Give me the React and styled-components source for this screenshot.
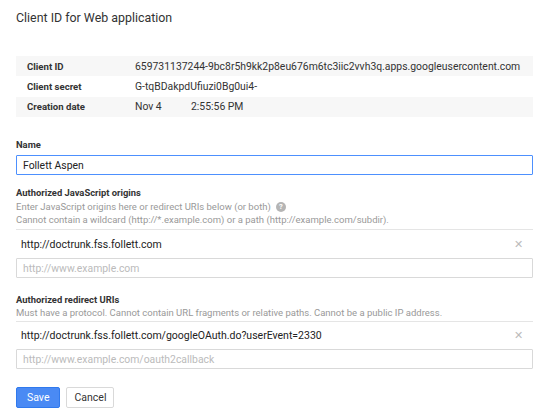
import React from 'react'
import styled, { createGlobalStyle } from 'styled-components'

const GlobalStyle = createGlobalStyle`
  body {
    margin: 0;
    background: #fff;
    font-family: Roboto, "Liberation Sans", Arial, sans-serif;
    color: #222;
  }
`

const Page = styled.div`
  width: 517px;
  padding: 9px 18px 0 16px;
`

const Title = styled.h1`
  margin: 0;
  font-size: 12.4px;
  font-weight: 400;
  line-height: 18px;
  color: #333;
`

const InfoTable = styled.div`
  margin-top: 29px;
  display: flex;
  flex-direction: column;
`

const InfoRow = styled.div`
  display: flex;
  align-items: center;
  height: 20.4px;
  padding-left: 11px;
  background: ${p => (p.$shaded ? '#f7f7f7' : '#fff')};
  font-size: 10.4px;
  white-space: nowrap;
`

const InfoLabel = styled.span`
  width: 108px;
  flex-shrink: 0;
  font-weight: 700;
  font-size: 9.6px;
  color: #333;
`

const InfoValue = styled.span`
  color: #333;
  display: flex;
`

const DatePart = styled.span`
  width: ${p => p.$w || 'auto'};
`

const Section = styled.div`
  margin-top: ${p => p.$top || 0}px;
`

const FieldLabel = styled.div`
  font-size: 9.4px;
  font-weight: 700;
  line-height: 14px;
  color: #333;
`

const Help = styled.div`
  font-size: 9.5px;
  line-height: ${p => p.$lh || 13}px;
  color: #999;
  display: flex;
  align-items: center;
  gap: 5px;
  white-space: nowrap;
`

const HelpIcon = styled.span`
  display: inline-flex;
  align-items: center;
  justify-content: center;
  width: 10px;
  height: 10px;
  border-radius: 50%;
  background: #b5b5b5;
  color: #fff;
  font-size: 7.5px;
  font-weight: 700;
  line-height: 1;
`

const Divider = styled.div`
  margin-top: 3px;
  border-top: 1px solid #e5e5e5;
`

const TextInput = styled.input`
  box-sizing: border-box;
  display: block;
  width: 100%;
  height: 20px;
  margin: 0;
  padding: 0 6px;
  border: 1px solid ${p => (p.$focused ? '#4d90fe' : '#d9d9d9')};
  border-radius: 1px;
  font-family: inherit;
  font-size: 10.4px;
  color: #222;
  outline: none;
  &::placeholder {
    color: #bbb;
  }
`

const UriItem = styled.div`
  display: flex;
  align-items: center;
  justify-content: space-between;
  height: ${p => p.$h || 28}px;
  padding: 0 10px 0 5px;
  font-size: 10.5px;
  color: #222;
`

const RemoveX = styled.span`
  color: #bbb;
  font-size: 11px;
  line-height: 1;
`

const Buttons = styled.div`
  margin-top: 18px;
  display: flex;
  gap: 6px;
`

const Button = styled.button`
  box-sizing: border-box;
  height: 21px;
  padding: 0 ${p => (p.$primary ? '10px' : '7px')};
  border-radius: 2px;
  font-family: inherit;
  font-size: 10.5px;
  border: 1px solid ${p => (p.$primary ? '#3079ed' : '#d9d9d9')};
  background: ${p => (p.$primary ? '#4a8af4' : '#fff')};
  color: ${p => (p.$primary ? '#fff' : '#333')};
  cursor: pointer;
`

export default function App() {
  return (
    <>
      <GlobalStyle />
      <Page>
        <Title>Client ID for Web application</Title>

        <InfoTable>
          <InfoRow $shaded>
            <InfoLabel>Client ID</InfoLabel>
            <InfoValue>659731137244-9bc8r5h9kk2p8eu676m6tc3iic2vvh3q.apps.googleusercontent.com</InfoValue>
          </InfoRow>
          <InfoRow>
            <InfoLabel>Client secret</InfoLabel>
            <InfoValue>G-tqBDakpdUfiuzi0Bg0ui4-</InfoValue>
          </InfoRow>
          <InfoRow $shaded>
            <InfoLabel>Creation date</InfoLabel>
            <InfoValue>
              <DatePart $w="56px">Nov 4</DatePart>
              <DatePart>2:55:56 PM</DatePart>
            </InfoValue>
          </InfoRow>
        </InfoTable>

        <Section $top={21}>
          <FieldLabel>Name</FieldLabel>
          <Section $top={3}>
            <TextInput $focused defaultValue="Follett Aspen" />
          </Section>
        </Section>

        <Section $top={11}>
          <FieldLabel>Authorized JavaScript origins</FieldLabel>
          <Help>
            Enter JavaScript origins here or redirect URIs below (or both)
            <HelpIcon>?</HelpIcon>
          </Help>
          <Help>Cannot contain a wildcard (http://*.example.com) or a path (http://example.com/subdir).</Help>
          <Divider />
          <UriItem>
            <span>http://doctrunk.fss.follett.com</span>
            <RemoveX>✕</RemoveX>
          </UriItem>
          <TextInput placeholder="http://www.example.com" />
        </Section>

        <Section $top={15}>
          <FieldLabel>Authorized redirect URIs</FieldLabel>
          <Help $lh={11}>Must have a protocol. Cannot contain URL fragments or relative paths. Cannot be a public IP address.</Help>
          <Divider />
          <UriItem $h={27}>
            <span>http://doctrunk.fss.follett.com/googleOAuth.do?userEvent=2330</span>
            <RemoveX>✕</RemoveX>
          </UriItem>
          <TextInput placeholder="http://www.example.com/oauth2callback" />
        </Section>

        <Buttons>
          <Button $primary>Save</Button>
          <Button>Cancel</Button>
        </Buttons>
      </Page>
    </>
  )
}
